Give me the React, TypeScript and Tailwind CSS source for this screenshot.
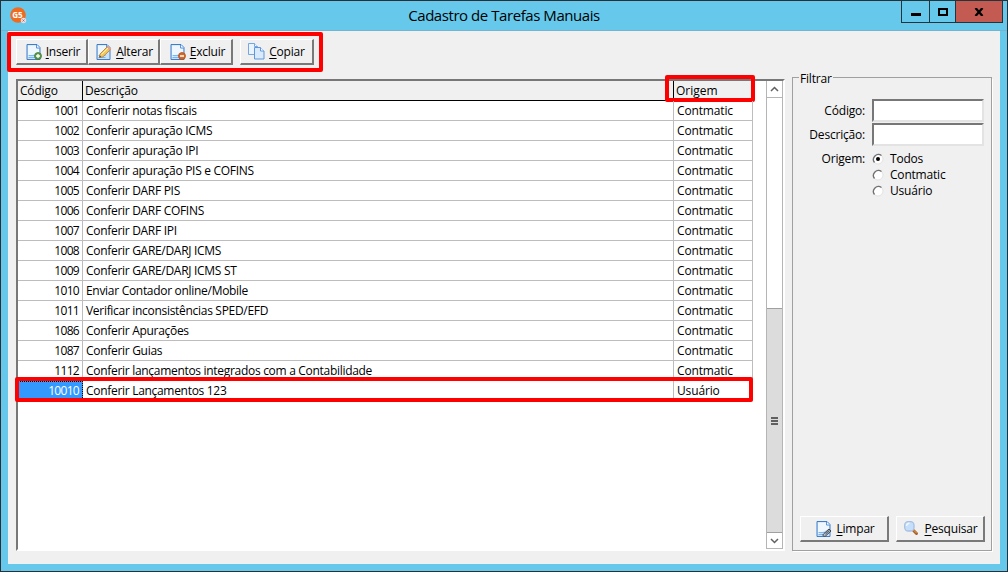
import type { ReactNode } from 'react';

const tasks = [
  { code: '1001', description: 'Conferir notas fiscais', origin: 'Contmatic' },
  { code: '1002', description: 'Conferir apuração ICMS', origin: 'Contmatic' },
  { code: '1003', description: 'Conferir apuração IPI', origin: 'Contmatic' },
  { code: '1004', description: 'Conferir apuração PIS e COFINS', origin: 'Contmatic' },
  { code: '1005', description: 'Conferir DARF PIS', origin: 'Contmatic' },
  { code: '1006', description: 'Conferir DARF COFINS', origin: 'Contmatic' },
  { code: '1007', description: 'Conferir DARF IPI', origin: 'Contmatic' },
  { code: '1008', description: 'Conferir GARE/DARJ ICMS', origin: 'Contmatic' },
  { code: '1009', description: 'Conferir GARE/DARJ ICMS ST', origin: 'Contmatic' },
  { code: '1010', description: 'Enviar Contador online/Mobile', origin: 'Contmatic' },
  { code: '1011', description: 'Verificar inconsistências SPED/EFD', origin: 'Contmatic' },
  { code: '1086', description: 'Conferir Apurações', origin: 'Contmatic' },
  { code: '1087', description: 'Conferir Guias', origin: 'Contmatic' },
  { code: '1112', description: 'Conferir lançamentos integrados com a Contabilidade', origin: 'Contmatic' },
  { code: '10010', description: 'Conferir Lançamentos 123', origin: 'Usuário' },
];

const selectedCode = '10010';

function PageIcon({ children }: { children?: ReactNode }) {
  return (
    <svg width="16" height="16" viewBox="0 0 16 16" className="shrink-0">
      <path d="M1 .5h10l3 3V15.500H1z" fill="#c9e1f9" stroke="#3f7ccb" />
      <path d="M2 1.500h8.500v3H13V8L2 13z" fill="#eef6fe" />
      <path d="M10.500 1v3H14" fill="#fff" stroke="#5b95dc" />
      <path d="M2.500 11.500h7M2.500 13.500h7" stroke="#75b8f3" />
      {children}
    </svg>
  );
}

function InsertIcon() {
  return (
    <PageIcon>
      <circle cx="12" cy="12" r="3.500" fill="#5f9b45" stroke="#3d7430" strokeWidth=".7" />
      <path d="M10 12h4M12 10v4" stroke="#fff" strokeWidth="1.300" />
    </PageIcon>
  );
}

function EditIcon() {
  return (
    <PageIcon>
      <path d="M4 10 11.500 2.500l3 3L7 12.800 3.300 13.500z" fill="#f4c65c" stroke="#ad7930" strokeWidth=".8" />
      <path d="m10.500 3.500 3 3L15.300 5l-3-3z" fill="#e9a184" />
      <path d="m5.500 10.500 6.500-6.500" stroke="#fff0ae" />
      <path d="m3.300 13.500.5-2 1.500 1.500z" fill="#444" />
    </PageIcon>
  );
}

function DeleteIcon() {
  return (
    <PageIcon>
      <circle cx="12" cy="12" r="3.500" fill="#db6822" stroke="#a54a18" strokeWidth=".7" />
      <path d="M10 12h4" stroke="#fff" strokeWidth="1.500" />
    </PageIcon>
  );
}

function CopyIcon() {
  return (
    <svg width="17" height="17" viewBox="0 0 17 17" className="shrink-0">
      <path d="M.5.500h6l3 3v8h-9z" fill="#eaf4fe" stroke="#75a6df" />
      <path d="M6.500.500v3h3" fill="#fff" stroke="#75a6df" />
      <path d="M6.500 4.500h6l3.500 3.500v8H6.500z" fill="#d8eafb" stroke="#5f97da" />
      <path d="M12.500 4.500V8H16" fill="#fff" stroke="#5f97da" />
    </svg>
  );
}

function ClearIcon() {
  return (
    <PageIcon>
      <path d="m7.500 13 5.500-5 2 2-5.500 5c-1.500 1-3.500-.5-2-2Z" fill="#b9c3cc" stroke="#39444e" />
      <path d="m9.500 13 4-3.700" stroke="#39444e" />
    </PageIcon>
  );
}

function SearchIcon() {
  return (
    <svg width="15" height="15" viewBox="0 0 15 15" className="shrink-0">
      <path d="m9.500 9.500 3 3" stroke="#a96025" strokeWidth="3" strokeLinecap="round" />
      <path d="m10 9.500 2.500 2.500" stroke="#e6a45d" strokeLinecap="round" />
      <rect x=".7" y=".7" width="9.300" height="9.300" rx="3.500" fill="#c5dffa" stroke="#a7bfe3" strokeWidth="1.300" />
      <path d="M2.500 5c.2-1.800 1.200-2.600 3-2.700" fill="none" stroke="#edf7ff" strokeWidth="1.500" />
    </svg>
  );
}

type ActionButtonProps = { icon: ReactNode; label: string; className: string };

function ActionButton({ icon, label, className }: ActionButtonProps) {
  return (
    <button
      className={`flex items-center justify-center border-t border-l border-white border-r-2 border-b-2 border-r-[#797979] border-b-[#797979] bg-[#f0f0f0] ${className}`}
    >
      {icon}
      <span>
        <span className="underline decoration-1 underline-offset-2">{label[0]}</span>
        {label.slice(1)}
      </span>
    </button>
  );
}

function TitleBar() {
  return (
    <header className="flex h-[30px] items-start border-b border-[#73b4d0]">
      <div className="w-[400px] pl-[9px]">
        <svg width="17" height="17" viewBox="0 0 17 17" className="mt-[6px]">
          <circle cx="8" cy="8" r="7.800" fill="#ef6b20" />
          <text x="2.300" y="10.500" fontFamily="Open Sans, sans-serif" fontSize="8" fontWeight="700" fill="#fff">
            G5
          </text>
          <circle cx="13.500" cy="13.500" r="2.700" fill="#e6dce0" />
          <path d="m12.500 12.500 2 2m0-2-2 2" stroke="#b64c50" strokeWidth=".7" />
        </svg>
      </div>
      <h1 className="w-[206px] pt-[3px] text-center text-[15px] leading-[22px] tracking-[-0.44px] whitespace-nowrap">
        Cadastro de Tarefas Manuais
      </h1>
      <div className="-mt-px mr-[4px] ml-auto flex h-[23px] w-[102px] border border-[#24343b]">
        <button className="flex w-[28px] items-center justify-center border-r border-[#24343b]" aria-label="Minimizar">
          <span className="mt-[5px] h-[3px] w-[10px] bg-black" />
        </button>
        <button className="flex w-[26px] items-center justify-center border-r border-[#24343b]" aria-label="Maximizar">
          <span className="h-2 w-[10px] border-2 border-black" />
        </button>
        <button className="flex flex-1 items-center justify-center bg-[#c35b52]" aria-label="Fechar">
          <svg width="10" height="8" viewBox="0 0 10 8">
            <path d="m1.500 0 7 8m0-8-7 8" stroke="#000" strokeWidth="2.300" />
          </svg>
        </button>
      </div>
    </header>
  );
}

function Toolbar() {
  return (
    <div className="relative flex h-12 items-start pt-2 pl-2">
      <ActionButton icon={<InsertIcon />} label="Inserir" className="h-[26px] w-[72px] gap-1 pl-[3px]" />
      <ActionButton icon={<EditIcon />} label="Alterar" className="h-[26px] w-[72px] gap-1 pl-[2px]" />
      <ActionButton icon={<DeleteIcon />} label="Excluir" className="h-[26px] w-[73px] gap-1 pl-[3px]" />
      <ActionButton icon={<CopyIcon />} label="Copiar" className="ml-[7px] h-[26px] w-[74px] gap-1" />
      <div className="pointer-events-none absolute top-px -left-px h-10 w-[316px] rounded-[2px] border-4 border-[#ff0000]" />
    </div>
  );
}

function TaskTable() {
  return (
    <div className="flex h-[472px] w-[769px] border-2 border-t-[#777] border-r-white border-b-white border-l-[#777] bg-white">
      <div className="w-[735px]">
        <div className="flex h-5 border-b border-black bg-[#f0f0f0] leading-[20px]">
          <div className="w-[65px] border-r border-black pl-[2px]">Código</div>
          <div className="w-[591px] border-r border-black pl-[2px]">Descrição</div>
          <div className="relative flex-1 pl-[2px] tracking-normal">
            Origem
            <div className="pointer-events-none absolute -top-[6px] -left-[9px] h-[27px] w-[90px] rounded-[2px] border-4 border-[#ff0000]" />
          </div>
        </div>
        {tasks.map((task) => (
          <div key={task.code} className="relative flex h-5 border-b border-[#bdbdbd] leading-[20px]">
            <div
              className={
                task.code === selectedCode
                  ? 'w-[65px] border border-dotted border-black bg-[#3399ff] pr-[3px] text-right leading-[18px] tracking-[-0.7px] text-white'
                  : 'w-[65px] border-r border-[#bdbdbd] pr-[3px] text-right tracking-[-0.7px]'
              }
            >
              {task.code}
            </div>
            <div className="w-[591px] border-r border-[#bdbdbd] pl-[3px] tracking-[-0.3px]">{task.description}</div>
            <div className="flex-1 border-r border-[#bdbdbd] pl-[3px] tracking-[-0.15px]">{task.origin}</div>
            {task.code === selectedCode && (
              <div className="pointer-events-none absolute -top-[4px] -left-[3px] h-[25px] w-[738px] rounded-[2px] border-4 border-[#ff0000]" />
            )}
          </div>
        ))}
      </div>
      <div className="ml-[13px] flex w-[17px] flex-col border-x border-[#b5b5b5]">
        <button className="flex h-[17px] items-center justify-center border-b border-[#b5b5b5]" aria-label="Subir">
          <svg width="9" height="6" viewBox="0 0 9 6">
            <path d="m1 5 3.500-3.500L8 5" fill="none" stroke="#606060" strokeWidth="1.500" />
          </svg>
        </button>
        <div className="h-[210px]" />
        <div className="flex h-[225px] flex-col items-center justify-center gap-px border-y border-[#a0a0a0] bg-[#dcdcdc]">
          <span className="h-[2px] w-[7px] bg-[#606060]" />
          <span className="h-[2px] w-[7px] bg-[#606060]" />
          <span className="h-[2px] w-[7px] bg-[#606060]" />
        </div>
        <button className="flex flex-1 items-center justify-center border-b border-[#b5b5b5]" aria-label="Descer">
          <svg width="9" height="6" viewBox="0 0 9 6">
            <path d="m1 1 3.500 3.500L8 1" fill="none" stroke="#606060" strokeWidth="1.500" />
          </svg>
        </button>
      </div>
    </div>
  );
}

const origins = ['Todos', 'Contmatic', 'Usuário'];

function RadioMark({ checked }: { checked: boolean }) {
  return (
    <svg width="12" height="12" viewBox="0 0 12 12">
      <circle cx="6" cy="6" r="5" fill="#fff" stroke="#e3e3e3" />
      <path d="M2.500 9.500A5 5 0 0 1 9.500 2.500" fill="none" stroke="#707070" strokeWidth="1.300" />
      {checked && <circle cx="6" cy="6" r="2" fill="#000" />}
    </svg>
  );
}

function FilterPanel() {
  return (
    <fieldset className="-mt-[9px] ml-[7px] flex h-[481px] w-[200px] flex-col">
      <div className="flex h-[8px] items-start">
        <span className="h-[8px] w-[7px] border-b border-[#a0a0a0]" />
        <span className="h-[8px] px-px leading-[18px]">Filtrar</span>
        <span className="h-[8px] flex-1 border-b border-[#a0a0a0]" />
      </div>
      <div className="flex flex-1 flex-col border-x border-b border-[#a0a0a0] pt-[21px] shadow-[1px_1px_0_#fff]">
        <label className="flex h-6 items-start">
          <span className="w-[72px] text-right leading-6">Código:</span>
          <input className="ml-[7px] h-[23px] w-[112px] border-2 border-t-[#777] border-r-[#e3e3e3] border-b-[#e3e3e3] border-l-[#777] bg-white outline-none" />
        </label>
        <label className="flex h-6 items-start">
          <span className="w-[72px] text-right leading-6">Descrição:</span>
          <input className="ml-[7px] h-[23px] w-[112px] border-2 border-t-[#777] border-r-[#e3e3e3] border-b-[#e3e3e3] border-l-[#777] bg-white outline-none" />
        </label>
        <div className="mt-1 flex">
          <span className="w-[72px] text-right leading-4">Origem:</span>
          <div className="ml-[7px]">
            {origins.map((origin, index) => (
              <div key={origin} className="flex h-4 items-center gap-[6px]">
                <RadioMark checked={index === 0} />
                {origin}
              </div>
            ))}
          </div>
        </div>
        <div className="mt-auto mb-[8px] ml-[7px] flex gap-[7px]">
          <ActionButton icon={<ClearIcon />} label="Limpar" className="h-[26px] w-[89px] gap-1 pl-[3px]" />
          <ActionButton icon={<SearchIcon />} label="Pesquisar" className="h-[26px] w-[89px] gap-[6px] pl-px" />
        </div>
      </div>
    </fieldset>
  );
}

function App() {
  return (
    <div className="flex h-[572px] w-[1008px] flex-col border border-[#2b3036] bg-[#66c9ec] font-['Open_Sans','Noto_Sans',sans-serif] text-[12px] tracking-[-0.2px] text-black">
      <TitleBar />
      <main className="mx-[7px] h-[533px] bg-[#f0f0f0]">
        <Toolbar />
        <div className="flex pl-2">
          <TaskTable />
          <FilterPanel />
        </div>
      </main>
    </div>
  );
}

export default App;
